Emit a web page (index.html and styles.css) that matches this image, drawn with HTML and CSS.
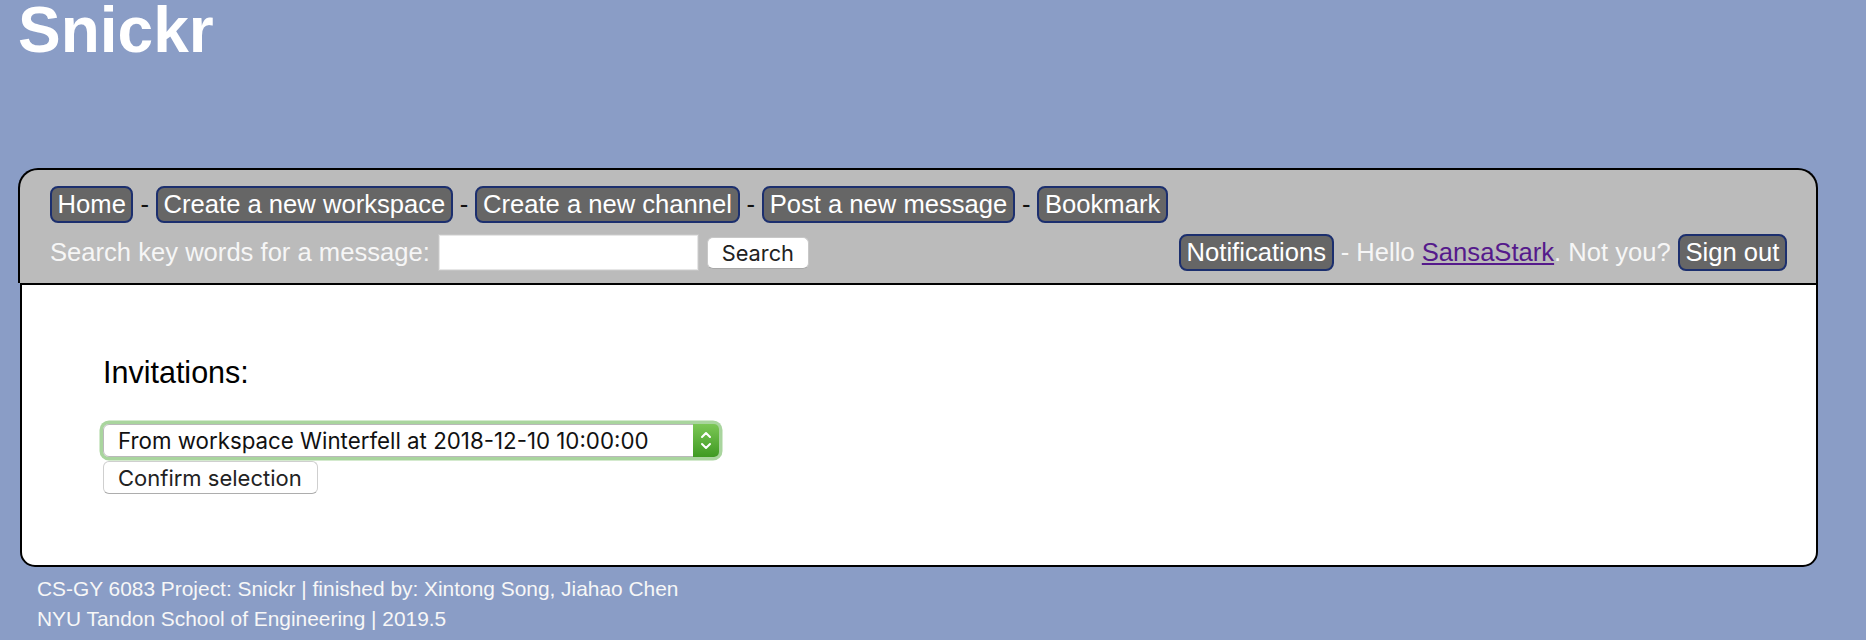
FILE: index.html
```html
<!DOCTYPE html>
<html lang="en">
<head>
<meta charset="utf-8">
<title>Snickr</title>
<link rel="stylesheet" href="styles.css">
</head>
<body>
<h1 class="logo">Snickr</h1>
<div class="panel">
  <div class="header">
    <nav class="nav">
      <a class="btn" href="#">Home</a><span class="sep">-</span><a class="btn" href="#">Create a new workspace</a><span class="sep">-</span><a class="btn" href="#">Create a new channel</a><span class="sep">-</span><a class="btn" href="#">Post a new message</a><span class="sep">-</span><a class="btn" href="#">Bookmark</a>
    </nav>
    <div class="bar">
      <form class="search">
        <label class="search-label" for="kw">Search key words for a message:</label>
        <input class="search-input" id="kw" type="text">
        <button class="search-btn" type="button">Search</button>
      </form>
      <div class="user">
        <a class="btn" href="#">Notifications</a><span class="txt"> - Hello </span><a class="name" href="#">SansaStark</a><span class="txt">. Not you? </span><a class="btn" href="#">Sign out</a>
      </div>
    </div>
  </div>
  <div class="content">
    <h3 class="inv-title">Invitations:</h3>
    <div class="select-wrap">
      <select class="inv-select">
        <option>From workspace Winterfell at 2018-12-10 10:00:00</option>
      </select>
      <span class="stepper">
        <svg width="26" height="33" viewBox="0 0 26 33">
          <defs>
            <linearGradient id="g" x1="0" y1="0" x2="0" y2="1">
              <stop offset="0" stop-color="#7cc756"/>
              <stop offset="1" stop-color="#3f9a22"/>
            </linearGradient>
          </defs>
          <path d="M0 0 H21 A5 5 0 0 1 26 5 V28 A5 5 0 0 1 21 33 H0 Z" fill="url(#g)"/>
          <path d="M9 13 L13 9 L17 13" fill="none" stroke="#fff" stroke-width="2" stroke-linecap="round" stroke-linejoin="round"/>
          <path d="M9 20 L13 24 L17 20" fill="none" stroke="#fff" stroke-width="2" stroke-linecap="round" stroke-linejoin="round"/>
        </svg>
      </span>
    </div>
    <button class="confirm" type="button">Confirm selection</button>
  </div>
</div>
<footer class="footer">
  <p class="foot-line">CS-GY 6083 Project: Snickr | finished by: Xintong Song, Jiahao Chen</p>
  <p class="foot-line">NYU Tandon School of Engineering | 2019.5</p>
</footer>
</body>
</html>
```
FILE: styles.css
```css
html, body {
  margin: 0;
  padding: 0;
}
body {
  background: #8a9dc6;
  font-family: "Liberation Sans", Arial, sans-serif;
  padding: 0 18px;
  height: 640px;
  overflow: hidden;
}
.logo {
  margin: 0;
  font-size: 64px;
  line-height: 60px;
  font-weight: bold;
  color: #fff;
}
.panel {
  width: 1800px;
  margin-top: 108px;
}
.header {
  background: #bbbbbb;
  border: 2px solid #000;
  border-bottom: none;
  border-radius: 20px 20px 0 0;
  padding: 16px 29px 12px 30px;
  font-size: 25.6px;
}
.nav {
  display: flex;
  align-items: center;
  height: 37px;
}
.btn {
  display: inline-block;
  background: #666666;
  color: #fff;
  text-decoration: none;
  border: 2px solid #1c2f6e;
  border-radius: 8px;
  padding: 2px 5.6px;
  line-height: 29px;
  white-space: nowrap;
}
.sep {
  color: #111;
  margin: 0 7px;
}
.bar {
  display: flex;
  justify-content: space-between;
  align-items: center;
  height: 37px;
  margin-top: 11px;
}
.search {
  display: flex;
  align-items: center;
  margin: 0;
}
.search-label {
  color: #f6f6f6;
  margin-right: 8px;
}
.search-input {
  box-sizing: border-box;
  width: 261px;
  height: 37px;
  border: 1px solid #c4c4c4;
  box-shadow: inset 0 0 0 1px #e6e6e6;
  background: #fff;
  margin: 0 8px 0 0;
  padding: 0 4px;
}
.search-btn {
  box-sizing: border-box;
  width: 102px;
  height: 32px;
  background: #fff;
  border: 1px solid #c8c8c8;
  border-bottom-color: #a8a8a8;
  border-radius: 6px;
  font-family: Inter, "Liberation Sans", sans-serif;
  font-size: 21.8px;
  color: #222;
  padding: 0;
}
.user {
  display: flex;
  align-items: center;
}
.txt {
  white-space: pre;
  color: #f6f6f6;
}
.name {
  color: #551a8b;
  text-decoration: underline;
}
.content {
  box-sizing: border-box;
  height: 284px;
  margin-left: 2px;
  background: #fff;
  border: 2px solid #000;
  border-radius: 0 0 15px 15px;
  padding: 70px 80px 0 81px;
}
.inv-title {
  margin: 0 0 34px;
  font-size: 30.5px;
  line-height: 35px;
  font-weight: normal;
  color: #000;
}
.select-wrap {
  position: relative;
  width: 616px;
  height: 33px;
  border-radius: 6px;
  box-shadow: 0 0 0 3.5px #a9d59e;
}
.inv-select {
  appearance: none;
  -webkit-appearance: none;
  box-sizing: border-box;
  width: 616px;
  height: 33px;
  border: 1px solid #b9b9b9;
  border-radius: 6px;
  background: #fff;
  font-family: Inter, "Liberation Sans", sans-serif;
  font-size: 22.3px;
  color: #111;
  padding: 0 0 0 14px;
  margin: 0;
  outline: none;
}
.stepper {
  position: absolute;
  right: 0;
  top: 0;
  width: 26px;
  height: 33px;
  display: block;
}
.stepper svg {
  display: block;
}
.confirm {
  display: block;
  box-sizing: border-box;
  width: 215px;
  height: 33px;
  margin-top: 4px;
  background: #fff;
  border: 1px solid #cfcfcf;
  border-bottom-color: #adadad;
  border-radius: 6px;
  font-family: Inter, "Liberation Sans", sans-serif;
  font-size: 22px;
  color: #222;
  text-align: left;
  padding: 0 0 0 14px;
}
.footer {
  padding: 7px 0 0 19px;
  color: #f7f7f7;
  font-size: 20.9px;
}
.foot-line {
  margin: 0;
  line-height: 29.5px;
}
```
